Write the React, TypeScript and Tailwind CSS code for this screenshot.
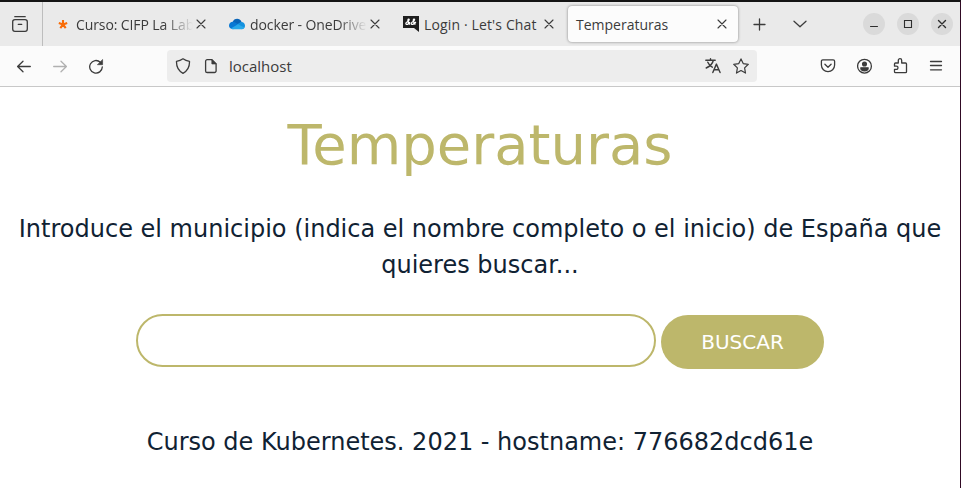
import type { ReactNode } from 'react';

const uiFont = "font-['Open_Sans','Noto_Sans',sans-serif]";

function Icon({ children, className = '' }: { children: ReactNode; className?: string }) {
  return (
    <svg
      viewBox="0 0 16 16"
      className={`h-4 w-4 shrink-0 fill-none stroke-current ${className}`}
      strokeWidth="1.3"
      strokeLinecap="round"
      strokeLinejoin="round"
    >
      {children}
    </svg>
  );
}

function CloseIcon() {
  return (
    <Icon>
      <path d="M4 4l8 8M12 4l-8 8" strokeWidth="1.1" />
    </Icon>
  );
}

function Tab({ icon, title, fade, tracking }: { icon: ReactNode; title: string; fade?: boolean; tracking: string }) {
  return (
    <div className="flex h-9 w-[174px] shrink-0 items-center pl-2">
      {icon}
      <div
        className={`ml-[5px] w-[117px] overflow-hidden pt-0.5 whitespace-nowrap ${
          fade ? '[mask-image:linear-gradient(to_right,black_75%,transparent)]' : ''
        }`}
      >
        <span className={tracking}>{title}</span>
      </div>
      <CloseIcon />
    </div>
  );
}

function WindowButton({ children }: { children: ReactNode }) {
  return (
    <button className="flex h-[22px] w-[22px] items-center justify-center rounded-full bg-[#dadada] text-[#2e2e2e]">
      <Icon>{children}</Icon>
    </button>
  );
}

function TabStrip() {
  return (
    <div className="flex h-[44px] items-center bg-[#eaeaea]">
      <div className="flex h-full w-[43px] items-center border-r border-[#bdbdbd] pl-3">
        <Icon>
          <path d="M2.8 .7h10.4M.7 5.8a2.2 2.2 0 0 1 2.2-2.2h10.2a2.2 2.2 0 0 1 2.2 2.2v7.3a2.2 2.2 0 0 1-2.2 2.2H2.9a2.2 2.2 0 0 1-2.2-2.2zM6.3 8.4h3.4" />
        </Icon>
      </div>
      <div className="ml-1 flex">
        <Tab
          fade
          title="Curso: CIFP La Lab"
          tracking="tracking-[-0.1px]"
          icon={
            <Icon className="text-[#f96c07]">
              <path d="M8 8.5V4M8 8.5l4.2-1.4M8 8.5l2.7 3.6M8 8.5l-2.7 3.6M8 8.5L3.8 7.1" strokeWidth="2.1" strokeLinecap="butt" />
            </Icon>
          }
        />
        <Tab
          fade
          title="docker - OneDrive"
          tracking="tracking-[-0.1px]"
          icon={
            <svg viewBox="0 0 16 16" className="h-4 w-4 shrink-0">
              <path d="M3.6 6.1C4.8 2.2 10.7 1.3 12.6 6L8 10z" fill="#0864b8" />
              <path d="M0 9.8c0-3.3 3.5-4.9 6.2-3.3L12 10l-8 3.2C1.4 13.2 0 11.5 0 9.8z" fill="#0878d4" />
              <path d="M8 8.2l4-2.2c2-.3 4 1.2 4 3.7 0 2-1.4 3.5-3.3 3.5z" fill="#1491df" />
              <path d="M1.8 12.6L9 8.2l6.3 3.3c-.6 1-1.5 1.7-2.8 1.7H4c-.9 0-1.6-.2-2.2-.6z" fill="#28a8ea" />
            </svg>
          }
        />
        <Tab
          title="Login · Let's Chat"
          tracking="tracking-[0.14px]"
          icon={
            <svg viewBox="0 0 16 16" className="h-4 w-4 shrink-0">
              <path d="M0 0h16v16l-5-4H0z" fill="#1e1e1e" />
              <path
                d="M7 8.5C5 6.7 4.2 3.4 5.6 3.2 7 3 5.6 5.2 4 6 2 7.2 2.8 9 4.5 8.3 5.8 7.8 6.6 6.5 6.8 6M12.4 8.5c-2-1.8-2.8-5.1-1.4-5.3 1.4-.2 0 2-1.6 2.8-2 1.2-1.2 3 .5 2.3 1.3-.5 2.4-1.8 3-2.3"
                fill="none"
                stroke="white"
                strokeWidth="1.3"
              />
            </svg>
          }
        />
        <div className="-ml-px flex h-9 w-[170px] items-center rounded-[4px] bg-[#fcfcfc] pl-2 shadow-[0_0_3px_rgba(0,0,0,0.45)]">
          <span className="w-[138px] pt-0.5">Temperaturas</span>
          <CloseIcon />
        </div>
      </div>
      <Icon className="ml-[13px]">
        <path d="M8.5 3v11M3 8.5h11" />
      </Icon>
      <Icon className="ml-[25px]">
        <path d="M2 5.2l6 5.5 6-5.5" />
      </Icon>
      <div className="ml-[55px] flex gap-3">
        <WindowButton>
          <path d="M4.5 10.5h7" strokeWidth="1" />
        </WindowButton>
        <WindowButton>
          <path d="M4.5 4.5h7v7h-7z" strokeWidth="1.1" strokeLinejoin="miter" />
        </WindowButton>
        <WindowButton>
          <path d="M4.5 4.5l7 7M11.5 4.5l-7 7" strokeWidth="1.4" />
        </WindowButton>
      </div>
    </div>
  );
}

function Toolbar() {
  return (
    <div className="flex h-[41px] items-center border-b border-[#c8c8c8] bg-[#fbfbfb] pl-4">
      <Icon>
        <path d="M14.3 8.5H1.8M7 3.2L1.6 8.5 7 13.8" />
      </Icon>
      <Icon className="ml-5 text-[#b0b0b0]">
        <path d="M1.7 8.5h12.5M9 3.2l5.4 5.3L9 13.8" />
      </Icon>
      <Icon className="ml-5">
        <path d="M14.3 9a6.3 6.3 0 1 1-2-4.8" />
        <path d="M14.6 1.8v4.9H9.7z" fill="currentColor" strokeWidth=".6" />
      </Icon>
      <div className="ml-[63px] flex h-8 w-[590px] items-center rounded-[4px] bg-[#ededed] pl-2">
        <Icon>
          <path d="M8 .8c2 1.5 4.1 2.2 6.5 2.5.2 5.1-1.2 9.3-6.5 12-5.3-2.7-6.7-6.9-6.5-12C3.9 3 6 2.3 8 .8z" />
        </Icon>
        <Icon className="ml-3">
          <path d="M4.2 1.7h4.7l4.2 4.2v7a1.6 1.6 0 0 1-1.6 1.6H4.2a1.6 1.6 0 0 1-1.6-1.6V3.3a1.6 1.6 0 0 1 1.6-1.6z" />
          <path d="M8.9 1.9v4h4z" fill="currentColor" strokeWidth=".8" />
        </Icon>
        <span className="ml-[10px] w-[476px] text-[15px]">localhost</span>
        <Icon>
          <path d="M.8 2.3h9.4M5.5.8v1.5M8.3 2.5C7.6 5.6 4.7 8.4 1.2 10M2.8 4.2c1 2.3 2.6 4 4.5 5M7.8 14.5l3.6-8.4 3.7 8.4M9 11.8h4.8" strokeWidth="1.4" />
        </Icon>
        <Icon className="ml-3">
          <path d="M8 .9l2.2 4.7 5.1.7-3.7 3.6.9 5.2L8 12.6l-4.5 2.5.9-5.2L.7 6.3l5.1-.7z" strokeWidth="1.2" />
        </Icon>
      </div>
      <Icon className="ml-[63px]">
        <path d="M2.8 1.9h10.4c.8 0 1.4.6 1.4 1.4V7a6.6 6.6 0 0 1-13.2 0V3.3c0-.8.6-1.4 1.4-1.4zM4.9 6.3L8 9.2l3.1-2.9" />
      </Icon>
      <Icon className="ml-[21px]">
        <circle cx="7.5" cy="8.2" r="6.9" />
        <circle cx="7.5" cy="6" r="1.9" fill="currentColor" />
        <path d="M3.8 9.8h7.4c0 4.2-7.4 4.2-7.4 0z" fill="currentColor" />
      </Icon>
      <Icon className="ml-5">
        <path d="M5.3 5V2.4a1.7 1.7 0 0 1 3.4 0V5h3.8c.6 0 1 .4 1 1v7.7c0 .6-.4 1-1 1H2.5c-.6 0-1-.4-1-1v-2.3h1.9a1.6 1.6 0 0 0 0-3.2H1.5V6c0-.6.4-1 1-1z" />
      </Icon>
      <Icon className="ml-[19px]">
        <path d="M2.5 3.5h11M2.5 7.5h11M2.5 11.8h11" />
      </Icon>
    </div>
  );
}

export default function App() {
  return (
    <div className="h-[488px] w-[961px] overflow-hidden border-t-2 border-r border-t-[#141414] border-r-[#300a24] bg-white">
      <header className={`${uiFont} text-[14px] leading-5 text-[#3b3b3b]`}>
        <TabStrip />
        <Toolbar />
      </header>
      <main className="flex flex-col items-center font-['DejaVu_Sans',sans-serif] text-[24px] leading-[36px] text-[#102233]">
        <h1 className="mt-[24px] text-[56px] leading-[67px] text-[#bdb76b]">Temperaturas</h1>
        <p className="mt-[33px] text-center">
          Introduce el municipio (indica el nombre completo o el inicio) de España que
          <br />
          quieres buscar...
        </p>
        <form className="mt-[31px] flex gap-[5px]" onSubmit={(event) => event.preventDefault()}>
          <input
            type="text"
            aria-label="Municipio"
            className="h-[53px] w-[520px] rounded-[27px] border-2 border-[#bdb76b] px-6 outline-none"
          />
          <button className="mt-px h-[54px] w-[163px] rounded-full bg-[#bdb76b] text-[20px] leading-[54px] text-white">
            BUSCAR
          </button>
        </form>
        <p className="mt-[55px]">Curso de Kubernetes. 2021 - hostname: 776682dcd61e</p>
      </main>
    </div>
  );
}
